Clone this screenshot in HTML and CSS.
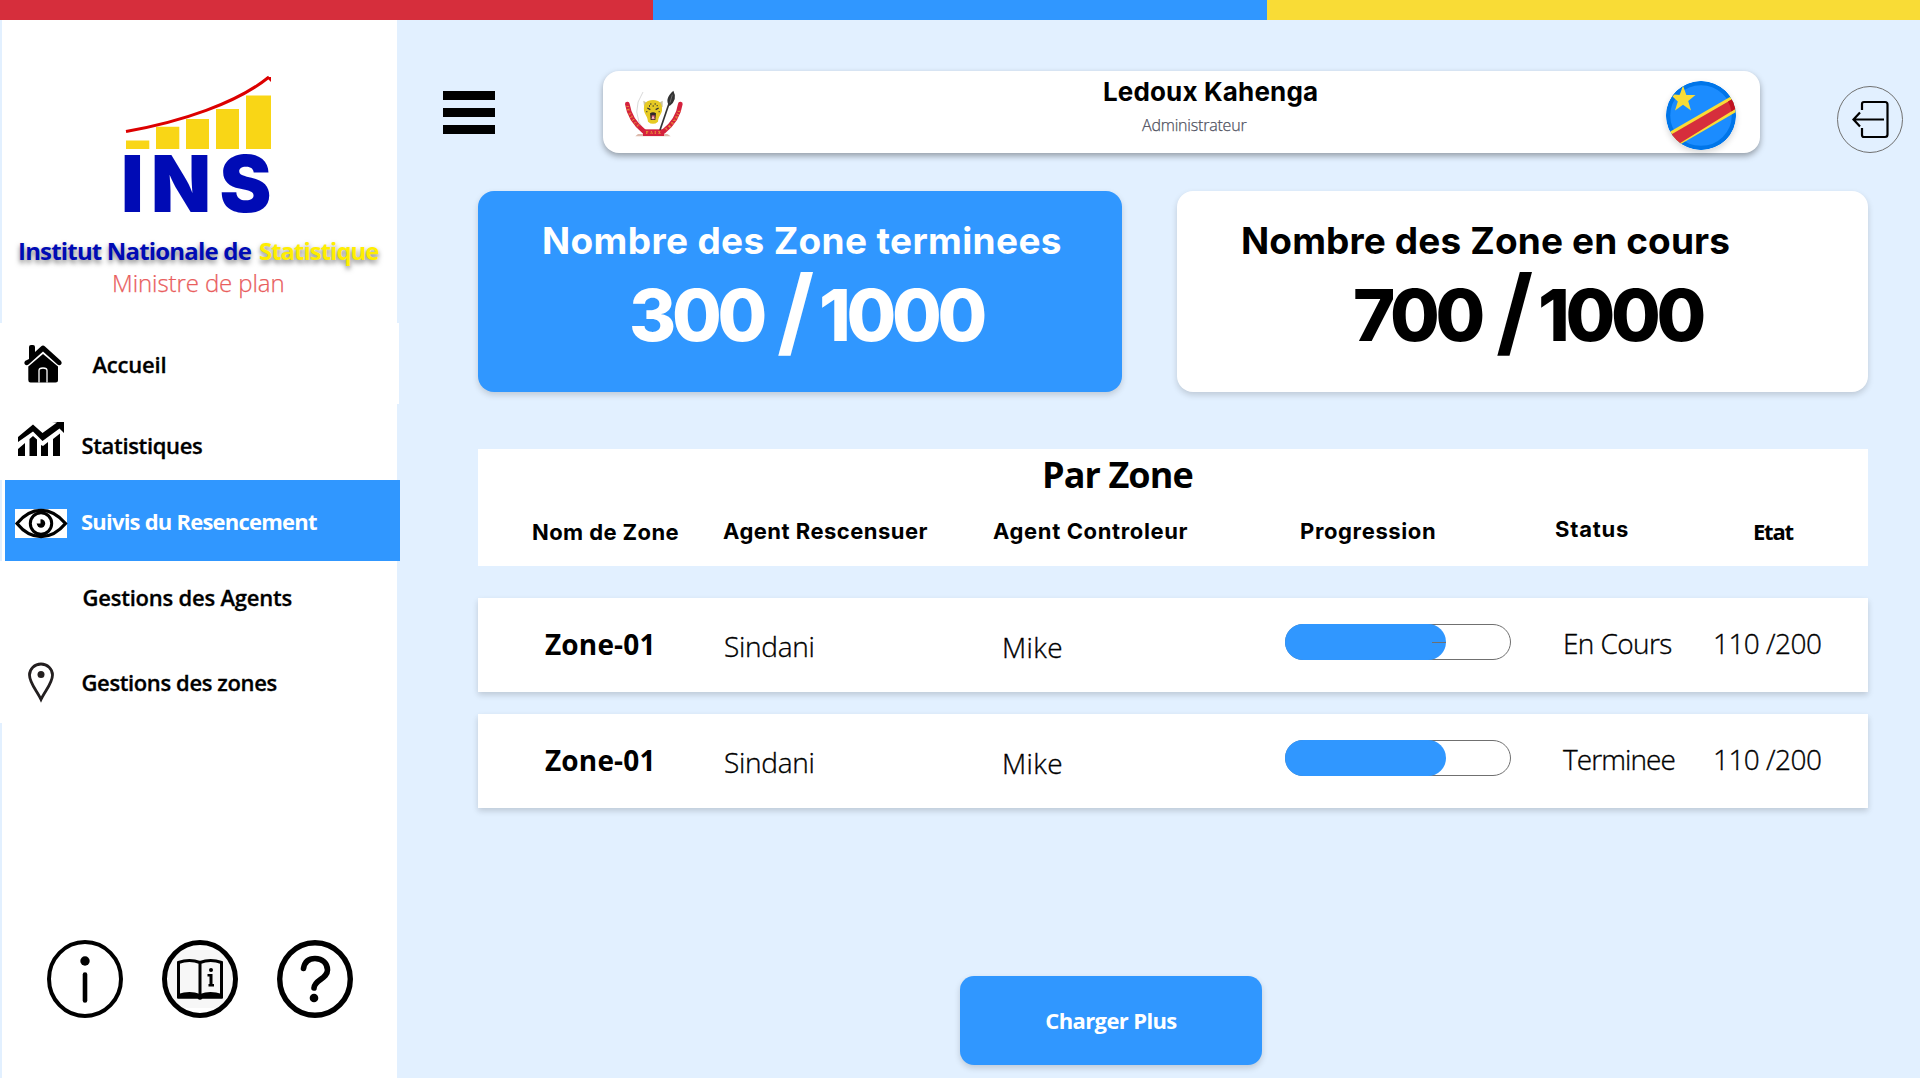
FILE: index.html
```html
<!DOCTYPE html>
<html lang="fr">
<head>
<meta charset="utf-8">
<title>INS - Suivis du Resencement</title>
<link rel="stylesheet" href="styles.css">
</head>
<body>
<div class="stripes"><span class="stripe-red"></span><span class="stripe-blue"></span><span class="stripe-yellow"></span></div>
<div class="app">
  <aside class="sidebar">
    <svg class="logo" viewBox="0 0 145 136" width="145" height="136">
      <g fill="#f9d616"><path d="M0 63.500h23.300V72H0zM30 49.800h23.300V72H30zM60 42h23V72H60zM90 32h23V72H90zM120 18.500h25V72h-25z"/></g>
      <path d="M0 54.500C55 45 111 26 143 0" fill="none" stroke="#dc0000" stroke-width="3"/>
      <path d="M140 0h5v5z" fill="#dc0000"/>
      <text class="logo-text" x="-5 25 93.500" y="135">INS</text>
    </svg>
    <h1 class="brand"><span class="brand-main">Institut Nationale de</span><span class="brand-accent">Statistique</span></h1>
    <p class="ministry">Ministre de plan</p>
    <nav class="nav">
      <a class="nav-item nav-home">
        <svg class="nav-icon" viewBox="0 0 80 81"><path d="M29 36V24q0-2 2-2h2q2 0 2 2v5l6-5.500q2-2 4 0L61 38q1.500 2 0 3.500t-3.500 0L43 28.500 28.500 41.500q-2 1.500-3.500 0t0-3.500z" fill="#000"/><path d="M28.300 43.500 43 31l15 12.500V57q0 2.500-2.500 2.500H30.500q-2.200 0-2.200-2.500z" fill="#000"/><path d="M39 59.500V47.500q0-2.500 4-2.500t4 2.500v12" fill="none" stroke="#fff" stroke-width="1.300"/></svg>
        <span>Accueil</span></a>
      <a class="nav-item nav-stats">
        <svg class="nav-icon" viewBox="0 0 80 81"><path d="M18 33 33 20.500 42.500 29 57 18.500 52 18h12v11l-4.500-4.500L42.500 37 33 27.500 18 38z" fill="#000"/><path d="M18 45l7-6v13h-7zM29.500 35l3.500-3 4 3.500V52h-7.500zM41 41l2 1 5-4v14h-7zM53 35l7-5.500V52h-7z" fill="#000"/></svg>
        <span>Statistiques</span></a>
      <a class="nav-item nav-follow">
        <svg class="nav-icon" viewBox="0 0 80 81"><path d="M10 29h52v29H10z" fill="#fff"/><path d="M12 43.500C26 26 46 26 60.500 43.500 46 61 26 61 12 43.500z" fill="none" stroke="#000" stroke-width="3.200"/><circle cx="36" cy="43.500" r="10.700" fill="none" stroke="#000" stroke-width="3"/><circle cx="36" cy="43.500" r="4.200" fill="#000"/><path d="M35.500 43.500h-4v-4.500h4z" fill="#fff"/></svg>
        <span>Suivis du Resencement</span></a>
      <a class="nav-item nav-agents"><span>Gestions des Agents</span></a>
      <a class="nav-item nav-zones">
        <svg class="nav-icon" viewBox="0 0 80 81"><path d="M41 57.500C37 49 29.500 41 29.500 33a11.500 11 0 0 1 23 0C52.500 41 45 49 41 57.500z" fill="none" stroke="#231f20" stroke-width="2.800"/><circle cx="41" cy="32.500" r="3.500" fill="#231f20"/></svg>
        <span>Gestions des zones</span></a>
    </nav>
    <div class="help">
      <svg viewBox="0 0 76 78" width="76" height="78"><ellipse cx="38" cy="39" rx="36" ry="37" fill="#fff" stroke="#000" stroke-width="4"/><circle cx="38" cy="21" r="4.700"/><path d="M38 34.500V60.500" stroke="#000" stroke-width="4.600" stroke-linecap="round"/></svg>
      <svg viewBox="0 0 76 78" width="76" height="78"><path d="M16 10h44l10 14v30L58 68H18L6 54V24z" fill="#f7f7f7"/><ellipse cx="38" cy="39" rx="35.500" ry="36.500" fill="none" stroke="#000" stroke-width="5"/><path d="M16.500 22.500q11-4 21.500 0 10.500-4 21.500 0V57h-43zM38 22.500V58" fill="none" stroke="#000" stroke-width="3"/><path d="M16 54q12-4 22 0 10-4 22 0v4.500H40.500q-2.500 2.500-5 0H16z"/><path d="M45.500 34h5v10h1.500v2.500h-5.500v-2.500h1v-7.500h-2z"/><circle cx="49" cy="30" r="2"/></svg>
      <svg viewBox="0 0 76 78" width="76" height="78"><ellipse cx="38" cy="39" rx="35.300" ry="36.300" fill="#fff" stroke="#000" stroke-width="5.400"/><path d="M26.500 28.500C28 20 34 18.500 38 18.500c7.500 0 12.500 5 12.500 11.500C50.500 39 37.500 39.500 37 48" fill="none" stroke="#000" stroke-width="5.600" stroke-linecap="round"/><circle cx="37" cy="58" r="4.300"/></svg>
    </div>
  </aside>

  <main class="main">
    <header class="topbar">
      <button class="menu"><span></span><span></span><span></span></button>
      <div class="profile">
        <svg class="emblem" viewBox="0 0 270 192" width="90" height="64">
          <path d="M84 162h88l10 7H76z" fill="#dcb9ab"/>
          <path d="M99 36q-40 60 5 120" fill="none" stroke="#c5c5c5" stroke-width="2"/>
          <path d="M52 72q7 48 50 82M211 72q-7 48-50 82" fill="none" stroke="#d4213d" stroke-width="14" stroke-linecap="round"/>
          <path d="M99 148h63v20H99z" fill="#d4213d"/>
          <path d="M150 150 179 65" stroke="#333" stroke-width="5"/><path d="M190 32q14 26-11 46-18-20 11-46z" fill="#333"/><path d="M187 44l-7 24" stroke="#888" stroke-width="2"/>
          <path d="M100 62l14 8-2 20-10-12zM158 62l-14 8 4 20 10-10z" fill="#c9c2a0"/>
          <path d="M129 60c20 0 29 11 27 32-3 13-11 17-12 33q-15 13-30 0c-1-16-9-20-12-33-2-21 7-32 27-32z" fill="#e6ca24"/>
          <path d="M112 84l9 5M146 84l-9 5M121 72h3M134 72h3M128 78h3M109 95h3M146 95h3M117 78h3M140 77h3" stroke="#333" stroke-width="4"/><path d="M120 100q9-6 18 0l-2 20h-14z" fill="#30292a"/><path d="M125 106h9v12h-9z" fill="#d9546a"/><path d="M126 117l3-7 3 7" stroke="#fff" stroke-width="2" fill="none"/>
          <path id="ribbon-left" d="M49 77q7 47 48 76" fill="none"/><path id="ribbon-right" d="M169 152q39-31 45-76" fill="none"/>
          <text class="motto"><textPath href="#ribbon-left" textLength="76">JUSTICE</textPath></text>
          <text class="motto"><textPath href="#ribbon-right" textLength="76">TRAVAIL</textPath></text>
          <text class="motto" x="108" y="162" textLength="44">PAIX</text>
        </svg>
        <div class="identity"><strong>Ledoux Kahenga</strong><span>Administrateur</span></div>
        <svg class="flag" viewBox="0 0 70 69" width="70" height="69">
          <defs><clipPath id="disc"><ellipse cx="35" cy="34.500" rx="35" ry="34.500"/></clipPath></defs>
          <g clip-path="url(#disc)"><path d="M0 0h70v69H0z" fill="#1b8cff"/>
          <ellipse cx="35" cy="34.500" rx="33" ry="32.500" fill="none" stroke="#0075e8" stroke-width="4.500"/>
          <path d="M0 53 70 12.500V31L8 67z" fill="#f9dc36"/><path d="M0 56.500 70 16V27.500L11 64z" fill="#d62e3c"/>
          <path d="M62 20.600l8-4.600v11.500l-4.700 3q-.3-5-3.300-9.900zM4 54.200L0 56.500v8l11-.5 2-1.300Q7 59 4 54.200z" fill="#c01020"/></g>
          <path d="M17 4.500l3.300 9.500H29.500l-7.300 6L25 29.500l-8-5.700L9 29.500l2.800-9L6.500 15.500 8.500 13.500 13.700 14z" fill="#f9dc36"/>
        </svg>
      </div>
      <button class="logout"><svg viewBox="0 0 66 67" width="66" height="67"><ellipse cx="33" cy="33.500" rx="32.500" ry="33" fill="none" stroke="#707070"/><path d="M25 24V18q0-2 2-2h21q2.500 0 2.500 2.500v30q0 2.500-2.500 2.500H27q-2 0-2-2V42M47 33.500H16M23 26.500l-6.500 7 6.500 7" fill="none" stroke="#000" stroke-width="2.200"/></svg></button>
    </header>

    <section class="cards">
      <article class="card card-done"><h2>Nombre des Zone terminees</h2><p class="count"><span>300</span><span class="slash">/</span><span>1000</span></p></article>
      <article class="card card-open"><h2>Nombre des Zone en cours</h2><p class="count"><span>700</span><span class="slash">/</span><span>1000</span></p></article>
    </section>

    <section class="table">
      <div class="table-head">
        <h3>Par Zone</h3>
        <div class="cols">
          <span class="h-zone">Nom de Zone</span><span class="h-agent">Agent Rescensuer</span><span class="h-control">Agent Controleur</span><span class="h-progress">Progression</span><span class="h-status">Status</span><span class="h-etat">Etat</span>
        </div>
      </div>
      <div class="cols row">
        <strong class="c-zone">Zone-01</strong><span class="c-agent">Sindani</span><span class="c-control">Mike</span>
        <div class="c-progress"><div class="bar"><div class="fill marked" style="width:161px"></div></div></div>
        <span class="c-status">En Cours</span><span class="c-etat">110 /200</span>
      </div>
      <div class="cols row">
        <strong class="c-zone">Zone-01</strong><span class="c-agent">Sindani</span><span class="c-control">Mike</span>
        <div class="c-progress"><div class="bar"><div class="fill" style="width:161px"></div></div></div>
        <span class="c-status c-done">Terminee</span><span class="c-etat">110 /200</span>
      </div>
    </section>
    <button class="more">Charger Plus</button>
  </main>
</div>
</body>
</html>
```
FILE: styles.css
```css
* { box-sizing: border-box; }
body { margin: 0; height: 1078px; overflow: hidden; background: #e2f0ff; color: #000; font-family: "Open Sans", "Noto Sans", sans-serif; white-space: nowrap; }
h1, h2, h3, p { margin: 0; }
button { border: 0; padding: 0; background: none; }
svg { display: block; flex: none; }

.stripes { display: flex; height: 20px; }
.stripe-red { width: 653px; background: #d62e3c; }
.stripe-blue { width: 614px; background: #3097ff; }
.stripe-yellow { flex: 1; background: #f9dc36; }
.app { display: flex; height: 1058px; }

.sidebar { width: 395px; margin-left: 2px; padding-top: 57px; background: #fff; display: flex; flex-direction: column; }
.logo { margin-left: 124px; overflow: visible; }
.logo-text { font: 900 78px Inter, sans-serif; fill: #000bb5; }
.brand { display: flex; gap: 8px; margin-top: 22px; padding-left: 16px; font-size: 24px; font-weight: 700; line-height: 32px; text-shadow: 0 3px 5px rgba(0, 0, 0, .5); }
.brand-main { color: #000bb5; letter-spacing: -.82px; }
.brand-accent { color: #ffee00; letter-spacing: -1.020px; }
.ministry { padding-left: 110px; color: #e95d5d; font-size: 24px; font-weight: 300; line-height: 32px; letter-spacing: -.09px; -webkit-text-stroke: .25px #e95d5d; }

.nav { display: flex; flex-direction: column; margin: 24px 0 0 -2px; }
.nav-item { display: flex; height: 81px; width: 397px; background: #fff; font-size: 22px; font-weight: 600; line-height: 82px; -webkit-text-stroke: .3px; }
.nav-icon { width: 80px; height: 81px; }
.nav-home { width: 399px; letter-spacing: -.2px; }
.nav-home span { margin-left: 12.500px; }
.nav-stats { height: 76px; letter-spacing: -.34px; }
.nav-stats span, .nav-zones span { margin-left: 1.500px; }
.nav-follow { width: 395px; margin-left: 5px; background: #3097ff; color: #fff; font-weight: 700; letter-spacing: -.78px; -webkit-text-stroke: 0; }
.nav-follow span { margin-left: -4px; }
.nav-agents { padding-left: 82.500px; line-height: 73px; letter-spacing: -.22px; }
.nav-zones { line-height: 80px; letter-spacing: -.38px; }
.help { display: flex; gap: 39px; margin-top: auto; padding: 0 0 60px 45px; }

.main { flex: 1; }
.topbar { display: flex; height: 133px; padding: 51px 0 0 46px; align-items: flex-start; }
.menu { display: flex; flex-direction: column; gap: 8px; width: 52px; margin-top: 20px; }
.menu span { height: 9px; background: #000; }
.profile { display: flex; align-items: flex-start; width: 1157px; height: 82px; margin-left: 108px; border-radius: 16px; background: #fff; box-shadow: 0 3px 6px rgba(0, 0, 0, .35); }
.emblem { margin: 9px 0 0 7px; }
.motto { font: 700 11px "Liberation Serif", serif; fill: #f2c230; }
.identity { display: flex; flex-direction: column; width: 240px; margin-left: 403px; }
.identity strong { padding: 1px 0 0; font: 700 26px/40px Inter, sans-serif; letter-spacing: .15px; }
.identity span { padding-left: 39px; color: #50525f; font-size: 16px; font-weight: 300; line-height: 26px; letter-spacing: -.2px; -webkit-text-stroke: .25px; }
.flag { margin: 10px 0 0 323px; border-radius: 50%; box-shadow: 0 3px 6px rgba(0, 0, 0, .16); }
.logout { margin: 15px 0 0 77px; }

.cards { display: flex; gap: 55px; margin: 38px 0 0 81px; }
.card { height: 201px; padding-top: 10px; border-radius: 16px; font-family: Inter, sans-serif; box-shadow: 0 3px 6px rgba(0, 0, 0, .16); }
.card h2 { font-size: 37px; font-weight: 700; line-height: 80px; letter-spacing: .35px; }
.count { display: grid; align-items: start; font-size: 72px; font-weight: 800; line-height: 67px; letter-spacing: -4.300px; }
.slash { font-size: 96px; font-weight: 700; line-height: 58px; height: 67px; }
.card-done { width: 644px; background: #3097ff; color: #fff; }
.card-done h2 { padding-left: 64px; }
.card-done .count { padding-left: 151px; grid-template-columns: 148px 42px auto; }
.card-open { width: 691px; background: #fff; }
.card-open h2 { padding-left: 64px; letter-spacing: .13px; }
.card-open .count { padding-left: 176px; grid-template-columns: 143px 42px auto; }

.table { width: 1390px; margin: 57px 0 0 81px; }
.table-head { height: 117px; margin-bottom: 32px; background: #fff; font-size: 22px; }
.table-head h3 { padding-left: 564px; font-size: 36px; font-weight: 700; height: 50px; line-height: 52px; letter-spacing: -.91px; }
.cols { display: grid; grid-template-columns: 237px 265px 290px 270px 160px 168px; align-items: start; }
.table-head .cols { font-family: Inter, sans-serif; font-weight: 700; line-height: 65px; }
.h-zone { padding: 1px 0 0 54px; letter-spacing: .4px; }
.h-agent { padding-left: 8px; letter-spacing: .48px; }
.h-control { padding-left: 13px; letter-spacing: .63px; }
.h-progress { padding-left: 30px; letter-spacing: .63px; }
.h-status { padding-left: 15px; line-height: 60px; letter-spacing: .78px; }
.table-head .h-etat { padding-left: 53px; font-family: "Open Sans", sans-serif; line-height: 64px; letter-spacing: -1.200px; }
.row { height: 94px; margin-bottom: 22px; background: #fff; box-shadow: 0 3px 6px rgba(0, 0, 0, .16); font-size: 28px; font-weight: 300; line-height: 90px; }
.row span { -webkit-text-stroke: .35px; }
.c-zone { padding: 1px 0 0 67px; font-weight: 700; letter-spacing: .15px; }
.c-agent { padding: 3px 0 0 9px; letter-spacing: -.28px; }
.c-control { padding: 4px 0 0 22px; letter-spacing: .4px; }
.c-progress { padding: 26px 0 0 15px; }
.c-status { padding-left: 23px; letter-spacing: -.6px; }
.c-done { letter-spacing: -.92px; }
.c-etat { padding-left: 13px; letter-spacing: -.55px; }
.bar { width: 226px; height: 36px; border-radius: 18px; border: 1px solid #707070; }
.fill { height: 36px; margin: -1px; border-radius: 18px; background: #3097ff; }
.marked { display: flex; align-items: center; justify-content: flex-end; }
.marked::after { content: ""; width: 14px; height: 1px; background: #707070; }
.more { display: block; width: 302px; height: 89px; margin: 168px 0 0 563px; border-radius: 14px; background: #3097ff; color: #fff; box-shadow: 0 3px 6px rgba(0, 0, 0, .16); font: 700 22px/89px "Open Sans", sans-serif; letter-spacing: -.63px; }
```
